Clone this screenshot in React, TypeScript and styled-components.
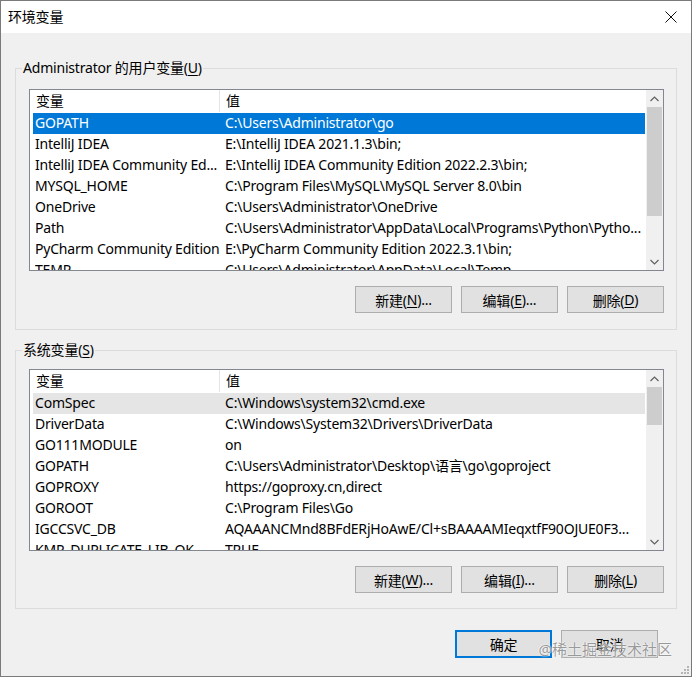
import React from "react";
import styled, { createGlobalStyle } from "styled-components";

const Global = createGlobalStyle`
  html, body { margin: 0; padding: 0; background: #f0f0f0; }
  body {
    font-family: "Noto Sans", "Noto Sans CJK SC", sans-serif;
    font-size: 14px;
    letter-spacing: -0.2px;
    color: #000;
  }
  * { box-sizing: border-box; }
`;

const Window = styled.div`
  position: relative;
  width: 692px;
  height: 677px;
  border: 1px solid #7a7a7a;
  background: #f0f0f0;
  display: flex;
  flex-direction: column;
  overflow: hidden;
`;

const TitleBar = styled.div`
  height: 32px;
  flex: none;
  background: #fff;
  display: flex;
  align-items: center;
  justify-content: space-between;
  padding: 0 14px 0 7px;
`;

const Title = styled.span`
  font-size: 14px;
  line-height: 20px;
`;

const Body = styled.div`
  flex: 1;
  display: flex;
  flex-direction: column;
  padding: 0 14px;
`;

const Group = styled.fieldset<{ $top: number }>`
  margin: ${(p) => p.$top}px 0 0 0;
  padding: 0;
  border: 1px solid #dcdcdc;
  min-width: 0;
`;

const Legend = styled.legend`
  margin-left: 6px;
  padding: 0 1px;
  font-size: 14px;
  line-height: 20px;
`;

const GroupInner = styled.div<{ $padTop: number; $padBottom: number }>`
  display: flex;
  flex-direction: column;
  padding: ${(p) => p.$padTop}px 12px ${(p) => p.$padBottom}px 13px;
`;

const ListBox = styled.div`
  height: 182px;
  border: 1px solid #828790;
  background: #fff;
  display: flex;
  overflow: hidden;
`;

const ListMain = styled.div`
  flex: 1;
  min-width: 0;
  display: flex;
  flex-direction: column;
  overflow: hidden;
`;

const Header = styled.div`
  display: grid;
  grid-template-columns: 190px 1fr;
  height: 22px;
  flex: none;
`;

const HeaderCell = styled.div<{ $divider?: boolean }>`
  padding-left: 6px;
  line-height: 22px;
  border-right: ${(p) => (p.$divider ? "1px solid #e5e5e5" : "none")};
`;

const Rows = styled.div`
  display: flex;
  flex-direction: column;
  padding: 1px 1px 0 3px;
`;

const Row = styled.div<{ $state?: "selected" | "hover" }>`
  display: grid;
  grid-template-columns: 190px 1fr;
  height: 21px;
  flex: none;
  padding-left: 2px;
  line-height: 20px;
  white-space: nowrap;
  background: ${(p) =>
    p.$state === "selected" ? "#0078d7" : p.$state === "hover" ? "#e5e5e5" : "transparent"};
  color: ${(p) => (p.$state === "selected" ? "#fff" : "#000")};
`;

const Cell = styled.span`
  overflow: hidden;
`;

const ScrollBar = styled.div`
  width: 17px;
  flex: none;
  background: #f0f0f0;
  display: flex;
  flex-direction: column;
`;

const ArrowBtn = styled.div`
  height: 17px;
  flex: none;
  display: flex;
  align-items: center;
  justify-content: center;
`;

const Track = styled.div`
  flex: 1;
  display: flex;
  flex-direction: column;
  padding: 0 1px;
`;

const Thumb = styled.div<{ $h: number }>`
  height: ${(p) => p.$h}px;
  background: #cdcdcd;
`;

const ButtonRow = styled.div<{ $top: number; $right?: number }>`
  display: flex;
  justify-content: flex-end;
  gap: 9px;
  margin-top: ${(p) => p.$top}px;
  padding-right: ${(p) => p.$right ?? 0}px;
`;

const Button = styled.button<{ $default?: boolean; $h?: number }>`
  width: 97px;
  height: ${(p) => p.$h ?? 27}px;
  background: #e1e1e1;
  border: 1px solid ${(p) => (p.$default ? "#0078d7" : "#adadad")};
  box-shadow: ${(p) => (p.$default ? "inset 0 0 0 1px #0078d7" : "none")};
  font-family: inherit;
  font-size: 14px;
  letter-spacing: -0.2px;
  color: #000;
  padding: 0;
  display: flex;
  align-items: center;
  justify-content: center;
`;

const Acc = styled.span`
  text-decoration: underline;
  text-underline-offset: 2px;
`;

const Watermark = styled.div`
  position: absolute;
  right: 19px;
  bottom: 17px;
  font-size: 15px;
  line-height: 20px;
  letter-spacing: 0;
  color: rgba(120, 120, 120, 0.75);
  text-shadow: 0 0 2px #fff, 0 0 1px #fff;
  pointer-events: none;
  white-space: nowrap;
`;

const Grip = styled.svg`
  position: absolute;
  right: 1px;
  bottom: 1px;
`;

const Chevron = ({ up }: { up?: boolean }) => (
  <svg width="9" height="6" viewBox="0 0 9 6">
    <path
      d={up ? "M0.5 5 L4.5 1 L8.5 5" : "M0.5 1 L4.5 5 L8.5 1"}
      fill="none"
      stroke="#606060"
      strokeWidth="1.2"
    />
  </svg>
);

type Item = [string, string];

const userVars: Item[] = [
  ["GOPATH", "C:\\Users\\Administrator\\go"],
  ["IntelliJ IDEA", "E:\\IntelliJ IDEA 2021.1.3\\bin;"],
  ["IntelliJ IDEA Community Ed...", "E:\\IntelliJ IDEA Community Edition 2022.2.3\\bin;"],
  ["MYSQL_HOME", "C:\\Program Files\\MySQL\\MySQL Server 8.0\\bin"],
  ["OneDrive", "C:\\Users\\Administrator\\OneDrive"],
  ["Path", "C:\\Users\\Administrator\\AppData\\Local\\Programs\\Python\\Pytho..."],
  ["PyCharm Community Edition", "E:\\PyCharm Community Edition 2022.3.1\\bin;"],
  ["TEMP", "C:\\Users\\Administrator\\AppData\\Local\\Temp"],
];

const sysVars: Item[] = [
  ["ComSpec", "C:\\Windows\\system32\\cmd.exe"],
  ["DriverData", "C:\\Windows\\System32\\Drivers\\DriverData"],
  ["GO111MODULE", "on"],
  ["GOPATH", "C:\\Users\\Administrator\\Desktop\\语言\\go\\goproject"],
  ["GOPROXY", "https://goproxy.cn,direct"],
  ["GOROOT", "C:\\Program Files\\Go"],
  ["IGCCSVC_DB", "AQAAANCMnd8BFdERjHoAwE/Cl+sBAAAAMIeqxtfF90OJUE0F3..."],
  ["KMP_DUPLICATE_LIB_OK", "TRUE"],
];

const VarList = ({
  items,
  selected,
  hover,
  thumb,
}: {
  items: Item[];
  selected?: number;
  hover?: number;
  thumb: number;
}) => (
  <ListBox>
    <ListMain>
      <Header>
        <HeaderCell $divider>变量</HeaderCell>
        <HeaderCell>值</HeaderCell>
      </Header>
      <Rows>
        {items.map(([k, v], i) => (
          <Row
            key={k + i}
            $state={i === selected ? "selected" : i === hover ? "hover" : undefined}
          >
            <Cell>{k}</Cell>
            <Cell>{v}</Cell>
          </Row>
        ))}
      </Rows>
    </ListMain>
    <ScrollBar>
      <ArrowBtn>
        <Chevron up />
      </ArrowBtn>
      <Track>
        <Thumb $h={thumb} />
      </Track>
      <ArrowBtn>
        <Chevron />
      </ArrowBtn>
    </ScrollBar>
  </ListBox>
);

export default function App() {
  return (
    <>
      <Global />
      <Window>
        <TitleBar>
          <Title>环境变量</Title>
          <svg width="12" height="12" viewBox="0 0 12 12">
            <path d="M0.5 0.5 L11.5 11.5 M11.5 0.5 L0.5 11.5" stroke="#111" strokeWidth="1" />
          </svg>
        </TitleBar>
        <Body>
          <Group $top={25}>
            <Legend>
              Administrator 的用户变量(<Acc>U</Acc>)
            </Legend>
            <GroupInner $padTop={11} $padBottom={16}>
              <VarList items={userVars} selected={0} thumb={109} />
              <ButtonRow $top={15}>
                <Button>
                  新建(<Acc>N</Acc>)...
                </Button>
                <Button>
                  编辑(<Acc>E</Acc>)...
                </Button>
                <Button>
                  删除(<Acc>D</Acc>)
                </Button>
              </ButtonRow>
            </GroupInner>
          </Group>
          <Group $top={10}>
            <Legend>
              系统变量(<Acc>S</Acc>)
            </Legend>
            <GroupInner $padTop={9} $padBottom={15}>
              <VarList items={sysVars} hover={0} thumb={38} />
              <ButtonRow $top={15}>
                <Button>
                  新建(<Acc>W</Acc>)...
                </Button>
                <Button>
                  编辑(<Acc>I</Acc>)...
                </Button>
                <Button>
                  删除(<Acc>L</Acc>)
                </Button>
              </ButtonRow>
            </GroupInner>
          </Group>
          <ButtonRow $top={21} $right={19}>
            <Button $default $h={28}>确定</Button>
            <Button $h={28}>取消</Button>
          </ButtonRow>
        </Body>
        <Watermark>@稀土掘金技术社区</Watermark>
        <Grip width="12" height="12" viewBox="0 0 12 12">
          <g fill="#b4b4b4">
            <rect x="9" y="3" width="2" height="2" />
            <rect x="6" y="6" width="2" height="2" />
            <rect x="9" y="6" width="2" height="2" />
            <rect x="3" y="9" width="2" height="2" />
            <rect x="6" y="9" width="2" height="2" />
            <rect x="9" y="9" width="2" height="2" />
          </g>
        </Grip>
      </Window>
    </>
  );
}
